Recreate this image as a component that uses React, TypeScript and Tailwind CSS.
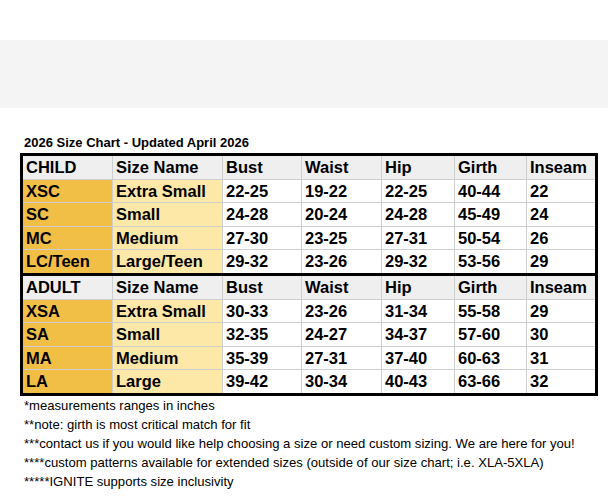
import React from 'react';

type Row = [string, string, string, string, string, string, string];

const childRows: Row[] = [
  ['XSC', 'Extra Small', '22-25', '19-22', '22-25', '40-44', '22'],
  ['SC', 'Small', '24-28', '20-24', '24-28', '45-49', '24'],
  ['MC', 'Medium', '27-30', '23-25', '27-31', '50-54', '26'],
  ['LC/Teen', 'Large/Teen', '29-32', '23-26', '29-32', '53-56', '29'],
];

const adultRows: Row[] = [
  ['XSA', 'Extra Small', '30-33', '23-26', '31-34', '55-58', '29'],
  ['SA', 'Small', '32-35', '24-27', '34-37', '57-60', '30'],
  ['MA', 'Medium', '35-39', '27-31', '37-40', '60-63', '31'],
  ['LA', 'Large', '39-42', '30-34', '40-43', '63-66', '32'],
];

const notes = [
  '*measurements ranges in inches',
  '**note: girth is most critical match for fit',
  '***contact us if you would like help choosing a size or need custom sizing. We are here for you!',
  '****custom patterns available for extended sizes (outside of our size chart; i.e. XLA-5XLA)',
  '*****IGNITE supports size inclusivity',
];

const Cell = ({ children, tone }: { children: React.ReactNode; tone: string }) => (
  <div className={`${tone} flex h-[22.6px] items-center pl-[3px] leading-none`}>{children}</div>
);

const Section = ({ label, rows }: { label: string; rows: Row[] }) => (
  <div className="grid grid-cols-[89px_109px_78px_79px_72px_71px_1fr] gap-px bg-[#cfcfcf]">
    {[label, 'Size Name', 'Bust', 'Waist', 'Hip', 'Girth', 'Inseam'].map((h) => (
      <Cell key={h} tone="bg-[#efefef]">
        {h}
      </Cell>
    ))}
    {rows.map((row) =>
      row.map((value, i) => (
        <Cell
          key={row[0] + i}
          tone={i === 0 ? 'bg-[#f1bf45]' : i === 1 ? 'bg-[#fde8a8]' : 'bg-white'}
        >
          {value}
        </Cell>
      ))
    )}
  </div>
);

const App = () => {
  return (
    <div className="min-h-screen w-[608px] bg-white font-['Liberation_Sans',Arial,sans-serif] text-black">
      <div className="h-[40px]" />
      <div className="h-[68px] bg-[#f4f4f4]" />

      <div className="mt-[27px] pl-[24px] text-[13px] font-bold leading-[16px]">
        2026 Size Chart - Updated April 2026
      </div>

      <div className="mt-[2px] ml-[20px] w-[578px] border-[3px] border-black text-[16.5px] font-bold">
        <Section label="CHILD" rows={childRows} />
        <div className="h-[3px] bg-black" />
        <Section label="ADULT" rows={adultRows} />
      </div>

      <div className="pl-[24px] text-[13.1px] leading-[19px]">
        {notes.map((note) => (
          <p key={note}>{note}</p>
        ))}
      </div>
    </div>
  );
};

export default App;
